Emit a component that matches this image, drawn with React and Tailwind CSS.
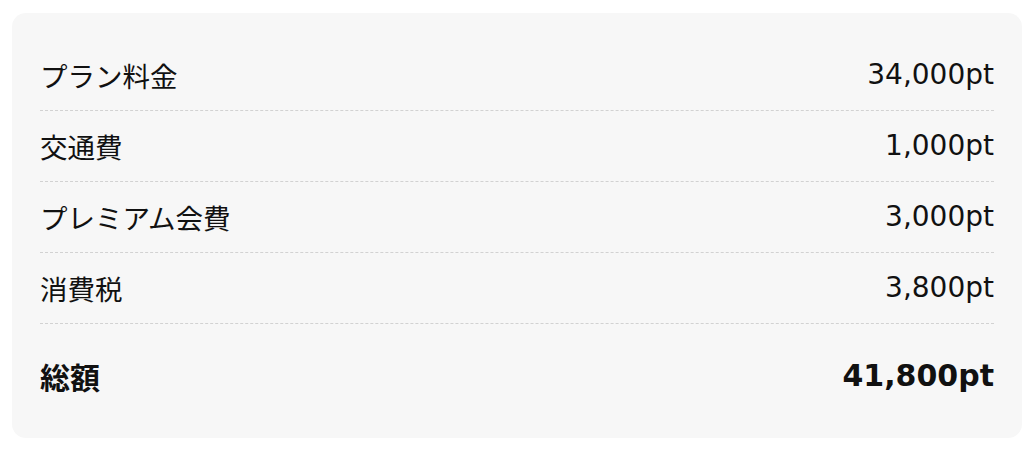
const rows = [
  { label: 'プラン料金', value: '34,000pt' },
  { label: '交通費', value: '1,000pt' },
  { label: 'プレミアム会費', value: '3,000pt' },
  { label: '消費税', value: '3,800pt' },
]

const num = { fontFamily: '"DejaVu Sans", "Noto Sans", sans-serif' }

export default function App() {
  return (
    <div
      className="w-[1024px] h-[455px] bg-white pt-[13px] pl-[12px]"
      style={{ fontFamily: '"Noto Sans CJK JP", "Noto Sans", sans-serif' }}
    >
      <div className="w-[1010px] bg-[#f7f7f7] rounded-[14px] px-[28px] pt-[27px] pb-[27px] text-[#111]">
        {rows.map((r) => (
          <div
            key={r.label}
            className="flex justify-between items-center py-[17px] leading-[36px] border-b border-dashed border-[#d2d2d2]"
          >
            <span className="text-[27.5px]">{r.label}</span>
            <span className="text-[28px]" style={num}>{r.value}</span>
          </div>
        ))}
        <div className="flex justify-between items-center pt-[34px] pb-[17px] leading-[36px] font-bold">
          <span className="text-[30px]">総額</span>
          <span className="text-[30px]" style={num}>41,800pt</span>
        </div>
      </div>
    </div>
  )
}
